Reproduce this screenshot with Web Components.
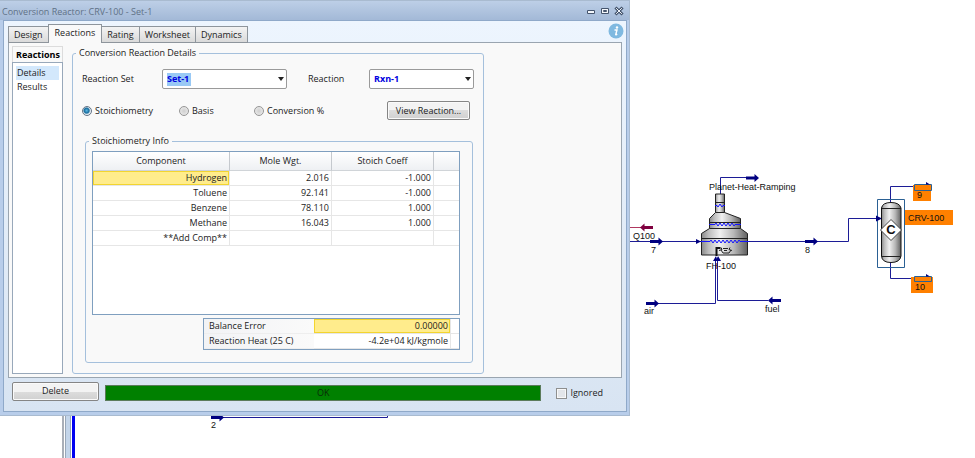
<!DOCTYPE html>
<html lang="en">
  <head>
    <meta charset="utf-8">
    <title>Conversion Reactor: CRV-100 - Set-1</title>
    <style>
      body {
        margin: 0;
        min-height: 100vh;
        position: relative;
        overflow: hidden;
        background: #fff;
        color: #222;
        font: 9px/14px "Open Sans", "Noto Sans", sans-serif;
      }
      reactor-window {
        position: absolute;
        top: 0;
        left: 0;
        width: calc(100% - 345px);
      }
    </style>
  </head>
  <body>
    <template id="flowSheet">
      <style>
        :host {
          display: block;
          height: 100vh;
        }
        svg {
          display: block;
          width: 100%;
          height: 100%;
        }
        .line {
          fill: none;
          stroke: #1c1c96;
        }
        .arrow {
          fill: #000080;
        }
        .heat {
          fill: #800040;
        }
        .coil {
          fill: none;
          stroke: #1414ff;
        }
        .shell {
          stroke: #222;
        }
        .mark {
          fill: #ff8000;
        }
        .pick {
          fill: none;
          stroke: #2a6094;
        }
        text {
          font: 9px "Liberation Sans", Arial, sans-serif;
          fill: #111;
        }
      </style>
      <svg>
        <defs>
          <linearGradient id="steel">
            <stop offset="0" stop-color="#8a8a8a"/>
            <stop offset=".15" stop-color="#bcbcbc"/>
            <stop offset=".4" stop-color="#f0f0f0"/>
            <stop offset=".7" stop-color="#b8b8b8"/>
            <stop offset="1" stop-color="#606060"/>
          </linearGradient>
          <!-- the tip is at 0,0 and points right -->
          <path id="stream" d="M-13-1.500h8.500v-2.500l4.500 4l-4.500 4v-2.500h-8.500z"/>
        </defs>

        <!-- pane splitter -->
        <path d="M63 400v60" stroke="#a9afb8" stroke-width="2"/>
        <path d="M67.500 400v60" stroke="#c3d5ea" stroke-width="5"/>
        <path d="M65.500 400v60M70.500 400v60" stroke="#98a7b8"/>
        <path d="M73.500 400v60" stroke="#0000f0" stroke-width="3"/>

        <path class="line" d="M223 417.500h164.500v-4"/>
        <use href="#stream" class="arrow" x="224" y="417.500"/>
        <text x="211" y="428">2</text>

        <path d="M630 227.500h12" stroke="#b03860"/>
        <use href="#stream" class="heat" transform="translate(640 227.500) scale(-1 1)"/>
        <path class="line" d="M630 241.500h218.500v-23h29"/>
        <use href="#stream" class="arrow" x="663" y="241.500"/>
        <path class="arrow" d="M696 239l5 2.500l-5 2.500z"/>
        <path class="line" d="M658 303.500h57.500v-46M768 300.500h-50.500v-43"/>
        <use href="#stream" class="arrow" x="659" y="303.500"/>
        <use href="#stream" class="arrow" transform="translate(768 300.500) scale(-1 1)"/>
        <use href="#stream" class="arrow" x="818" y="241.500"/>
        <path class="line" d="M720.500 195v-17.500h26"/>
        <use href="#stream" class="arrow" x="759" y="178"/>

        <!-- fired heater -->
        <g fill="url(#steel)" class="shell">
          <path d="M715.500 194h9v19h-9z"/>
          <path d="M715.500 212.500h9l16 6v10h-31v-10z"/>
          <path d="M709.500 228.500h31l7 5v21.500h-46v-21.500z"/>
          <path d="M715.500 202.500h9M709.500 222.500h31M701.500 238.500h46" fill="none"/>
        </g>
        <g class="coil">
          <path d="M715 205.500h2l1 1.500l2-3l2 3l1-1.500h2"/>
          <path d="M709 224.500h6l1-1.500l2 3l2-3l2 3l2-3l2 3l2-3l2 3l2-3l2 3l1-1.500h6"/>
          <path d="M701 241.500h9l1-1.500l2 3l2-3l2 3l2-3l2 3l2-3l2 3l2-3l2 3l2-3l2 3l2-3l2 3l2-3l1 1.500h9"/>
        </g>
        <path d="M716.500 256v-8h4" fill="none" stroke="#111" stroke-width="2"/>
        <path d="M719 250.500l3-1l-1-2M723 248.500h5M730 247.500l-1 2l3 1M721 250l2 3h6l2-3M724 250.500h3" fill="none" stroke="#222"/>
        <path class="arrow" d="M713 261l3-5l1 3l1-3l3 5z"/>

        <!-- conversion reactor -->
        <path class="line" d="M890.500 203v-16.500h24M890.500 261v17.500h24"/>
        <path class="mark" d="M913 185h18v16h-18zM905 210h48v15h-48zM911 277h22v16h-22z"/>
        <path class="pick" d="M914.500 184.500h17v6h-17zM914.500 276.500h17v5h-17zM877.500 199.500h27v68h-27z"/>
        <path class="arrow" d="M926 182l4 2.500h-4zM926 274l4 2.500h-4zM876 215.500l6 3l-6 3z"/>
        <path d="M881.500 208q1-5.500 9.500-5.500t10 5.500v48q-1 6.500-10 6.500t-9.500-6.500z" fill="url(#steel)" stroke="#111"/>
        <path d="M882 208.500h19M882 256.500h19" stroke="#222"/>
        <path d="M891 219.500l10.500 10.500l-10.500 10.500l-10.500-10.500z" fill="#fff" stroke="#444"/>
        <text x="891" y="234" text-anchor="middle" style="font-size: 13px; font-weight: bold">C</text>

        <text x="633" y="239">Q100</text>
        <text x="651" y="253">7</text>
        <text x="644" y="314">air</text>
        <text x="765" y="312">fuel</text>
        <text x="706" y="269">FH-100</text>
        <text x="709" y="190">Planet-Heat-Ramping</text>
        <text x="805" y="253">8</text>
        <text x="917" y="198">9</text>
        <text x="908" y="221">CRV-100</text>
        <text x="915" y="290">10</text>
      </svg>
    </template>

    <template id="reactorWindow">
      <style>
        :host {
          display: block;
          box-sizing: border-box;
          padding: 0 2px 3px 3px;
          background: #b8cdea;
          border: 1px solid #a9bbd0;
          border-width: 1px 1px 1px 0;
        }
        header {
          display: flex;
          align-items: center;
          height: 19px;
          margin: 0 -2px 0 -3px;
          padding: 0 5px 0 2px;
          background: linear-gradient(#bdcfe7, #a3b9d7);
          color: #5f7186;
        }
        h1 {
          flex: 1;
          margin: 3px 0 0;
          font: inherit;
        }
        header button {
          display: flex;
          margin: 0 0 0 4px;
          padding: 0;
          border: 0;
          background: none;
        }
        .client {
          padding: 4px 4px 10px;
          border: 1px solid #8fa9c9;
          background: linear-gradient(#edf5fe, #d8e4f2);
        }
        .top {
          display: flex;
          align-items: flex-start;
          justify-content: space-between;
        }
        .info {
          display: flex;
          margin: -2px -2px 0 0;
        }
        main {
          display: flex;
          align-items: stretch;
          gap: 9px;
          padding: 3px;
          border: 1px solid #9aa5b0;
          background: #f9f9f9;
        }
        footer {
          display: flex;
          align-items: center;
          gap: 6px;
          margin: 3px 19px 0 4px;
        }
        .delete {
          width: 87px;
        }
        .status {
          flex: 1;
          height: 14px;
          margin-top: 4px;
          border: 1px solid #5b7b5b;
          background: #008000;
          color: #0a2a0a;
          text-align: center;
        }
        label {
          display: flex;
          align-items: center;
          gap: 3px;
          margin: 4px 0 0 9px;
        }
        input {
          appearance: none;
          box-sizing: border-box;
          width: 11px;
          height: 11px;
          margin: 0;
          border: 1px solid #8e8f8f;
          background: #e3e6ea;
          box-shadow: inset 0 0 0 1px #f8f8f8;
        }
      </style>
      <header>
        <h1>Conversion Reactor: CRV-100 - Set-1</h1>
        <button aria-label="Minimize">
          <svg width="10" height="10" fill="#f4f7fb" stroke="#44546c"><path d="M1.500 4.500h7v3h-7z"/></svg>
        </button>
        <button aria-label="Maximize">
          <svg width="10" height="10" fill="#f4f7fb" stroke="#44546c"><path d="M1.500 2.500h7v5h-7zM3.500 4.500h3v1h-3z"/></svg>
        </button>
        <button aria-label="Close">
          <svg width="10" height="10" fill="none"><path d="M2.500 2.500l5 5M7.500 2.500l-5 5" stroke="#44546c" stroke-width="3" stroke-linecap="square"/><path d="M2.500 2.500l5 5M7.500 2.500l-5 5" stroke="#f4f7fb" stroke-linecap="square"/></svg>
        </button>
      </header>
      <div class="client">
        <div class="top">
          <tab-strip></tab-strip>
          <svg class="info" width="16" height="16" role="img" aria-label="Info">
            <circle cx="8" cy="8" r="7.500" fill="#80b9e0"/>
            <circle cx="9" cy="4.500" r="1.200" fill="#fff"/>
            <path d="M6.500 7h2.500l-1.300 4.500q0 .7 1.500-.3" fill="none" stroke="#fff" stroke-width="1.400"/>
          </svg>
        </div>
        <main>
          <page-list></page-list>
          <slot></slot>
        </main>
        <footer>
          <push-button class="delete">Delete</push-button>
          <div class="status">OK</div>
          <label><input type="checkbox">Ignored</label>
        </footer>
      </div>
    </template>

    <template id="tabStrip">
      <style>
        :host {
          display: flex;
          align-items: flex-end;
          height: 18px;
          margin: 0 0 -1px 1px;
        }
        button {
          height: 17px;
          margin: 0 0 0 -1px;
          padding: 0 5px;
          border: 1px solid #8e959c;
          background: linear-gradient(#f3f3f3, #dadada);
          color: inherit;
          font: inherit;
          white-space: nowrap;
        }
        [aria-selected=true] {
          position: relative;
          height: 19px;
          padding: 0 6px 2px;
          border-bottom: 0;
          background: #f9f9f9;
        }
      </style>
      <button role="tab">Design</button>
      <button role="tab" aria-selected="true">Reactions</button>
      <button role="tab">Rating</button>
      <button role="tab">Worksheet</button>
      <button role="tab">Dynamics</button>
    </template>

    <template id="pageList">
      <style>
        :host {
          display: flex;
          flex-direction: column;
          width: 51px;
        }
        h2 {
          margin: 0;
          padding: 1px 0 0 3px;
          border: 1px solid #dcdcdc;
          border-bottom: 0;
          font: inherit;
          font-weight: bold;
          color: #000;
        }
        nav {
          flex: 1;
          padding: 3px;
          border: 1px solid #98a8ba;
          background: #fff;
        }
        a {
          display: block;
          padding-left: 1px;
          color: inherit;
          text-decoration: none;
        }
        .current {
          background: #d3e8fc;
        }
      </style>
      <h2>Reactions</h2>
      <nav>
        <a class="current" href="#details">Details</a>
        <a href="#results">Results</a>
      </nav>
    </template>

    <template id="groupBox">
      <style>
        :host {
          display: block;
        }
        fieldset {
          margin: 0;
          padding: 0;
          border: 1px solid #a5c0dc;
          border-radius: 3px;
          min-width: 0;
        }
        legend {
          margin-left: 3px;
          padding: 0 3px;
        }
      </style>
      <fieldset>
        <legend><slot name="title"></slot></legend>
        <slot></slot>
      </fieldset>
    </template>

    <template id="pushButton">
      <style>
        :host {
          display: block;
        }
        button {
          width: 100%;
          height: 19px;
          padding: 0;
          border: 1px solid #858585;
          border-radius: 2px;
          background: linear-gradient(#f3f3f3 50%, #dddddd 50%, #d0d0d0);
          box-shadow: inset 0 0 0 1px #fafafa;
          color: inherit;
          font: inherit;
        }
      </style>
      <button><slot></slot></button>
    </template>

    <template id="reactionForm">
      <style>
        :host {
          display: block;
          padding: 9px 9px 14px;
        }
        .row {
          display: grid;
          align-items: center;
        }
        .sets {
          grid-template-columns: 80px 125px 1fr 105px;
        }
        .basis {
          grid-template-columns: 97px 75px 1fr 83px;
          margin-top: 12px;
          padding-right: 4px;
        }
        .sets label:nth-of-type(2) {
          padding-left: 21px;
        }
        .basis label {
          display: flex;
          align-items: center;
          gap: 3px;
        }
        .combo {
          display: grid;
          align-items: center;
        }
        .combo > * {
          grid-area: 1 / 1;
        }
        select {
          appearance: none;
          width: 100%;
          height: 20px;
          padding: 0 4px;
          border: 1px solid #9a9a9a;
          border-radius: 2px;
          background: #fff;
          color: #0000e0;
          font: inherit;
          font-weight: bold;
        }
        #set {
          background: linear-gradient(#99c9f5, #99c9f5) 4px 3px / 24px 13px no-repeat #fff;
        }
        .combo svg {
          justify-self: end;
          margin-right: 2px;
          pointer-events: none;
        }
        input {
          appearance: none;
          box-sizing: border-box;
          width: 10px;
          height: 10px;
          margin: 0;
          border: 1px solid #969696;
          border-radius: 50%;
          background: radial-gradient(#cfcfcf, #f0f0f0);
        }
        input:checked {
          border-color: #657486;
          background: radial-gradient(circle at 45% 45%, #5bb8e4, #176b9c 40%, #e6eef4 60%);
        }
      </style>
      <div class="row sets">
        <label for="set">Reaction Set</label>
        <span class="combo">
          <select id="set"><option>Set-1</option></select>
          <svg width="8" height="4"><path d="M1 0h6l-3 4z" fill="#222"/></svg>
        </span>
        <label for="rxn">Reaction</label>
        <span class="combo">
          <select id="rxn"><option>Rxn-1</option></select>
          <svg width="8" height="4"><path d="M1 0h6l-3 4z" fill="#222"/></svg>
        </span>
      </div>
      <div class="row basis">
        <label><input type="radio" name="basis" checked>Stoichiometry</label>
        <label><input type="radio" name="basis">Basis</label>
        <label><input type="radio" name="basis">Conversion %</label>
        <push-button>View Reaction...</push-button>
      </div>
    </template>

    <template id="stoichTable">
      <style>
        :host {
          display: block;
          padding: 3px 12px 12px 6px;
        }
        table {
          width: 100%;
          border-collapse: separate;
          border-spacing: 0;
          table-layout: fixed;
        }
        th {
          height: 18px;
          padding: 0;
          border-right: 1px solid #c5c9ce;
          border-bottom: 1px solid #d0d4d8;
          background: linear-gradient(#fff, #eef0f3);
          font-weight: normal;
        }
        td {
          box-sizing: border-box;
          height: 15px;
          padding: 0 2px;
          border-right: 1px solid #e6e6e6;
          border-bottom: 1px solid #e6e6e6;
          line-height: 14px;
          text-align: right;
        }
        th:last-child,
        td:last-child {
          border-right: 0;
        }
        .active {
          background: #ffec8c;
          box-shadow: inset 0 0 0 1px #f3d52f;
        }
        .grid {
          min-height: 162px;
          border: 1px solid #7f9fbf;
          background: #fff;
        }
        .totals {
          margin: 3px 0 0 111px;
          border: 1px solid #7f9fbf;
          background: #fff;
        }
        .totals th {
          height: 14px;
          padding-left: 5px;
          border-right: 0;
          border-bottom: 1px solid #eee;
          background: linear-gradient(90deg, #f2f3f5, #fafafa);
          text-align: left;
        }
      </style>
      <div class="grid">
        <table>
          <colgroup>
            <col style="width: 137px"><col style="width: 102px"><col style="width: 102px"><col>
          </colgroup>
          <thead>
            <tr><th>Component</th><th>Mole Wgt.</th><th>Stoich Coeff</th><th></th></tr>
          </thead>
          <tbody></tbody>
        </table>
      </div>
      <div class="totals">
        <table>
          <colgroup><col style="width: 110px"><col><col style="width: 8px"></colgroup>
          <tr><th>Balance Error</th><td class="active">0.00000</td><td></td></tr>
          <tr><th>Reaction Heat (25 C)</th><td>-4.2e+04 kJ/kgmole</td><td></td></tr>
        </table>
      </div>
    </template>

    <flow-sheet></flow-sheet>
    <reactor-window>
      <group-box style="width: 412px">
        <span slot="title">Conversion Reaction Details</span>
        <reaction-form></reaction-form>
        <group-box style="margin: 0 10px 10px 12px">
          <span slot="title">Stoichiometry Info</span>
          <stoich-table></stoich-table>
        </group-box>
      </group-box>
    </reactor-window>

    <script>
      class TemplateElement extends HTMLElement {
        connectedCallback() {
          if (this.shadowRoot) return
          this.attachShadow({ mode: 'open' })
          const template = document.getElementById(this.constructor.template)
          this.shadowRoot.appendChild(template.content.cloneNode(true))
          this.ready()
        }

        ready() {}
      }

      customElements.define('flow-sheet', class extends TemplateElement {
        static template = 'flowSheet'
      })

      customElements.define('push-button', class extends TemplateElement {
        static template = 'pushButton'
      })

      customElements.define('group-box', class extends TemplateElement {
        static template = 'groupBox'
      })

      customElements.define('page-list', class extends TemplateElement {
        static template = 'pageList'
      })

      customElements.define('tab-strip', class extends TemplateElement {
        static template = 'tabStrip'

        ready() {
          const tabs = this.shadowRoot.querySelectorAll('button')
          tabs.forEach((tab) => {
            tab.onclick = () => tabs.forEach((t) => t.setAttribute('aria-selected', t === tab))
          })
        }
      })

      customElements.define('reaction-form', class extends TemplateElement {
        static template = 'reactionForm'
      })

      customElements.define('stoich-table', class extends TemplateElement {
        static template = 'stoichTable'

        ready() {
          const rows = [
            ['Hydrogen', '2.016', '-1.000', ''],
            ['Toluene', '92.141', '-1.000', ''],
            ['Benzene', '78.110', '1.000', ''],
            ['Methane', '16.043', '1.000', ''],
            ['**Add Comp**', '', '', '']
          ]
          const body = this.shadowRoot.querySelector('tbody')
          for (const cells of rows) {
            const tr = body.insertRow()
            for (const text of cells) tr.insertCell().textContent = text
          }
          body.rows[0].cells[0].className = 'active'
        }
      })

      customElements.define('reactor-window', class extends TemplateElement {
        static template = 'reactorWindow'
      })
    </script>
  </body>
</html>
